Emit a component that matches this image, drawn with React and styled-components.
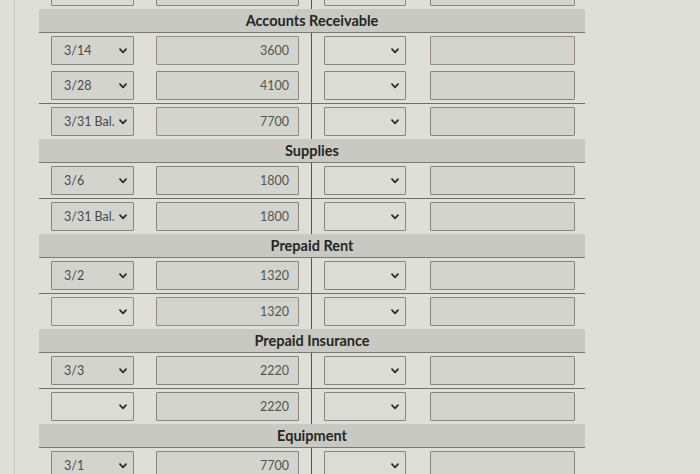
import styled, { createGlobalStyle } from "styled-components";

const GlobalStyle = createGlobalStyle`
  html, body {
    margin: 0;
    padding: 0;
    background: #dfdfda;
  }
  body {
    font-family: Lato, "Open Sans", sans-serif;
    color: #4a4a47;
  }
`;

const ledger = [
  {
    title: "Accounts Receivable",
    rows: [
      { date: "3/14", amount: "3600", tint: true },
      { date: "3/28", amount: "4100" },
      { date: "3/31 Bal.", amount: "7700", ruled: true, tint: true },
    ],
  },
  {
    title: "Supplies",
    rows: [
      { date: "3/6", amount: "1800" },
      { date: "3/31 Bal.", amount: "1800", ruled: true },
    ],
  },
  {
    title: "Prepaid Rent",
    rows: [
      { date: "3/2", amount: "1320" },
      { date: "", amount: "1320", ruled: true, tint: true },
    ],
  },
  {
    title: "Prepaid Insurance",
    rows: [
      { date: "3/3", amount: "2220" },
      { date: "", amount: "2220", ruled: true },
    ],
  },
  {
    title: "Equipment",
    rows: [{ date: "3/1", amount: "7700" }],
  },
];

const Screen = styled.div`
  height: 474px;
  overflow: hidden;
  padding-left: 14px;
  box-sizing: border-box;
`;

const Panel = styled.div`
  display: flow-root;
  height: 100%;
  border-left: 1px solid #cbcbc5;
  padding-left: 24px;
`;

const Sheet = styled.div`
  width: 546px;
  margin-top: -26px;
`;

const SectionTitle = styled.div`
  height: 24px;
  background: #c9c9c3;
  border-bottom: 1px solid #7b7b76;
  box-sizing: border-box;
  display: flex;
  align-items: center;
  justify-content: center;
  font-size: 14.5px;
  font-weight: 700;
  color: #262624;
`;

const Row = styled.div`
  display: grid;
  grid-template-columns: 1fr 1fr;
  border-top: ${(p) => (p.$ruled ? "1px solid #6f6f6b" : "none")};
`;

const Half = styled.div`
  display: flex;
  justify-content: space-between;
  align-items: center;
  padding: 3px ${(p) => (p.$right ? "10px" : "12px")} 3px 12px;
  border-right: ${(p) => (p.$right ? "none" : "1px solid #55554f")};
`;

const Dropdown = styled.div`
  width: ${(p) => p.$w}px;
  height: 29px;
  box-sizing: border-box;
  display: flex;
  align-items: center;
  justify-content: space-between;
  padding: 0 6px 0 12px;
  background: ${(p) => (p.$blank ? "#dcdcd7" : "#d4d4ce")};
  border: 1px solid ${(p) => (p.$tint ? "#978985" : "#86867f")};
  border-radius: 1px;
  font-size: 12.5px;
  color: #4a4a47;
`;

const Field = styled.div`
  width: ${(p) => p.$w}px;
  height: 29px;
  box-sizing: border-box;
  display: flex;
  align-items: center;
  justify-content: flex-end;
  padding-right: 9px;
  background: #d4d4ce;
  border: 1px solid ${(p) => (p.$tint ? "#978985" : "#86867f")};
  border-radius: 1px;
  font-size: 12.5px;
  color: #55554f;
`;

const Chevron = () => (
  <svg width="8" height="6" viewBox="0 0 8 6">
    <polyline
      points="1,1.2 4,4.4 7,1.2"
      fill="none"
      stroke="#2f2f2d"
      strokeWidth="1.8"
      strokeLinecap="round"
      strokeLinejoin="round"
    />
  </svg>
);

const Select = ({ value, w, tint }) => (
  <Dropdown $w={w} $blank={!value} $tint={tint}>
    <span>{value}</span>
    <Chevron />
  </Dropdown>
);

const EntryRow = ({ date, amount, ruled, tint }) => (
  <Row $ruled={ruled}>
    <Half>
      <Select value={date} w={83} tint={tint && !date} />
      <Field $w={143} $tint={tint}>
        {amount}
      </Field>
    </Half>
    <Half $right>
      <Select value="" w={82} />
      <Field $w={145} $tint={tint && ruled === undefined} />
    </Half>
  </Row>
);

export default function App() {
  return (
    <>
      <GlobalStyle />
      <Screen>
        <Panel>
          <Sheet>
            <EntryRow date="" amount="" />
            {ledger.map((section) => (
              <section key={section.title}>
                <SectionTitle>{section.title}</SectionTitle>
                {section.rows.map((row, i) => (
                  <EntryRow key={i} {...row} />
                ))}
              </section>
            ))}
          </Sheet>
        </Panel>
      </Screen>
    </>
  );
}
